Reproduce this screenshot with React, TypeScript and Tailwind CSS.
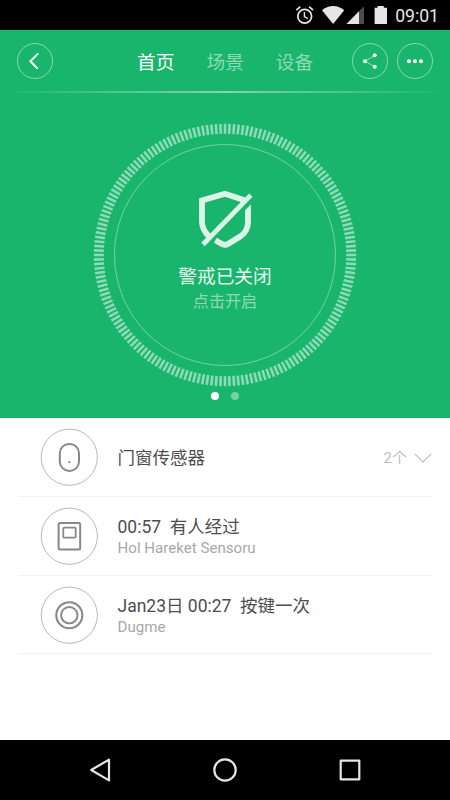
import type { ReactNode } from "react";

const TICKS = Array.from({ length: 180 }, (_, i) => i * 2);

interface SensorRowProps {
  icon: ReactNode;
  title: string;
  subtitle?: string;
  trailing?: ReactNode;
  className: string;
}

function StatusBar() {
  return (
    <div className="flex h-[30px] items-center justify-end bg-black pr-[11px]">
      <svg width="96" height="30" viewBox="0 0 96 30" aria-hidden>
        <g fill="none" stroke="#e6e6e6">
          <circle cx="9.7" cy="16.2" r="6.9" strokeWidth="1.7" />
          <path d="M9.4 12v4.7l3.4 2" strokeWidth="1.4" />
          <path d="M1.3 10.1l4-3.4M18.1 10.1l-4-3.4" strokeWidth="1.7" />
        </g>
        <path d="M27 10.3C29.8 7.7 33.8 6 38.1 6s8.3 1.7 11.1 4.3L38.1 23.9z" fill="#e6e6e6" />
        <path d="M69 6.2V24H51.5z" fill="#4d4d4d" />
        <path d="M64 11.3V24H51.5z" fill="#e6e6e6" />
        <path d="M82.5 6h6.3v1.8H92V24H79.6V7.8h2.9z" fill="#e6e6e6" />
      </svg>
      <span className="ml-[4px] mt-[2px] text-[17.6px] leading-[30px] text-[#e6e6e6]">09:01</span>
    </div>
  );
}

function RoundButton({ label, children }: { label: string; children: ReactNode }) {
  return (
    <button type="button" aria-label={label} className="h-9 w-9">
      <svg width="36" height="36" viewBox="0 0 36 36">
        <circle cx="18" cy="18" r="17.5" fill="none" stroke="#fff" strokeOpacity=".6" strokeWidth=".8" />
        {children}
      </svg>
    </button>
  );
}

function Header() {
  return (
    <header className="h-[63px]">
      <div className="flex h-[62px] items-center justify-between px-[17px]">
        <RoundButton label="返回">
          <path d="M21.2 10.4l-7.8 7.9 7.3 7.5" fill="none" stroke="#fff" strokeWidth="2" />
        </RoundButton>
        <nav className="ml-[84px] mt-[3px] flex flex-1 gap-[32px] text-[18.7px] leading-[28px] text-white/50">
          <span className="text-white">首页</span>
          <span>场景</span>
          <span>设备</span>
        </nav>
        <div className="flex gap-[9px]">
          <RoundButton label="分享">
            <path d="M22.8 12.4l-9.8 5.8 9.8 5.6" fill="none" stroke="#fff" strokeOpacity=".7" strokeWidth=".8" />
            <circle cx="22.7" cy="12.3" r="2" fill="#fff" />
            <circle cx="13" cy="18.2" r="2" fill="#fff" />
            <circle cx="22.7" cy="23.8" r="2" fill="#fff" />
          </RoundButton>
          <RoundButton label="更多">
            <circle cx="12" cy="18.2" r="2" fill="#fff" />
            <circle cx="18" cy="18.2" r="2" fill="#fff" />
            <circle cx="24" cy="18.2" r="2" fill="#fff" />
          </RoundButton>
        </div>
      </div>
      <div className="-mt-px h-[2px] bg-linear-to-r from-white/0 via-white/45 to-white/0" />
    </header>
  );
}

function AlarmDial() {
  return (
    <div className="relative mx-auto mt-[30px] h-[264px] w-[264px]">
      <svg width="264" height="264" viewBox="-132 -132 264 264" className="absolute inset-0" aria-hidden>
        {TICKS.map((angle) => (
          <path key={angle} d="M0-121.2V-131.2" stroke="#fff" strokeOpacity=".5" strokeWidth="2.6" transform={`rotate(${angle})`} />
        ))}
        <circle r="110.5" fill="none" stroke="#fff" strokeOpacity=".55" strokeWidth=".7" />
      </svg>
      <div className="relative flex flex-col items-center pt-[66px]">
        <svg width="56" height="60" viewBox="0 0 56 60" fill="none" stroke="#dcf4e8" strokeWidth="5.8" aria-hidden>
          <path d="M47.5 11.3L28 4.8 5 11.4V33C5 39 8 43.5 12 47.5" />
          <path d="M18.3 51.2L25 54.9Q28 56.7 31 54.9L43.5 47.3Q51 42 51 33V21" />
          <path d="M53.9 15.2V21.2H48.1z" fill="#dcf4e8" stroke="none" />
          <path d="M53.8 6.2L6 55.5" strokeWidth="4.8" />
        </svg>
        <p className="mt-[14px] text-[18.7px] leading-[28px] text-white/90">警戒已关闭</p>
        <p className="text-[16.1px] leading-[22px] text-white/50">点击开启</p>
      </div>
    </div>
  );
}

function SensorRow({ icon, title, subtitle, trailing, className }: SensorRowProps) {
  return (
    <li className={`mx-[18px] flex items-center border-b border-[#f3f3f3] pl-[22px] ${className}`}>
      <svg width="58" height="58" viewBox="-29.3 -29.2 58 58" fill="none" stroke="#888" aria-hidden>
        <circle r="28.1" strokeWidth=".7" stroke="#999" />
        {icon}
      </svg>
      <div className="ml-[19.5px] flex-1">
        <p className="whitespace-pre text-[17.5px] leading-[26px] text-[#4d4d4d]">{title}</p>
        {subtitle && <p className="-mt-[2px] text-[15.1px] leading-[20px] text-[#a8a8a8]">{subtitle}</p>}
      </div>
      {trailing}
    </li>
  );
}

function NavigationBar() {
  return (
    <div className="flex h-[60px] items-center justify-center bg-black">
      <svg width="280" height="30" viewBox="0 0 280 30" fill="none" stroke="#e6e6e6" strokeWidth="2.2" strokeLinejoin="round" aria-hidden>
        <path d="M24 4.6V25.4L6.2 15z" />
        <circle cx="140" cy="15" r="10.7" />
        <path d="M255.7 5.7h18.6v18.6h-18.6z" />
      </svg>
    </div>
  );
}

export default function App() {
  return (
    <div className="flex h-[800px] w-[450px] flex-col overflow-hidden bg-white font-[Roboto,'Noto_Sans_CJK_SC',sans-serif]">
      <StatusBar />
      <section className="h-[388px] bg-[#19b56c]">
        <Header />
        <AlarmDial />
        <div className="mt-[4.5px] flex justify-center gap-[12px]">
          <span className="h-2 w-2 rounded-full bg-white" />
          <span className="h-2 w-2 rounded-full bg-white/40" />
        </div>
      </section>
      <ul className="flex-1">
        <SensorRow
          className="h-[79px] *:first:mt-0 *:nth-2:pt-px"
          title="门窗传感器"
          icon={
            <>
              <rect x="-9.5" y="-13.3" width="19.2" height="27" rx="9.4" strokeWidth="2" />
              <circle cx="0" cy="5" r="1.1" fill="#888" stroke="none" />
            </>
          }
          trailing={
            <div className="flex items-center gap-[7px] pt-px text-[15px] leading-[22px] text-[#bfbfbf]">
              <span>2个</span>
              <svg width="18" height="10" viewBox="0 0 18 10" fill="none" stroke="#bbb" strokeWidth="1.1" aria-hidden>
                <path d="M.8.8L9 8.9 17.2.8" />
              </svg>
            </div>
          }
        />
        <SensorRow
          className="h-[79px]"
          title="00:57  有人经过"
          subtitle="Hol Hareket Sensoru"
          icon={
            <>
              <rect x="-10.7" y="-13.2" width="21.6" height="26.4" rx="1.5" strokeWidth="2" />
              <rect x="-6" y="-8.5" width="12.4" height="10" rx="1" strokeWidth="1.8" />
            </>
          }
        />
        <SensorRow
          className="h-[78px]"
          title="Jan23日 00:27  按键一次"
          subtitle="Dugme"
          icon={
            <>
              <circle r="13" strokeWidth="2.1" />
              <circle r="8.2" strokeWidth="1.9" />
            </>
          }
        />
      </ul>
      <NavigationBar />
    </div>
  );
}
